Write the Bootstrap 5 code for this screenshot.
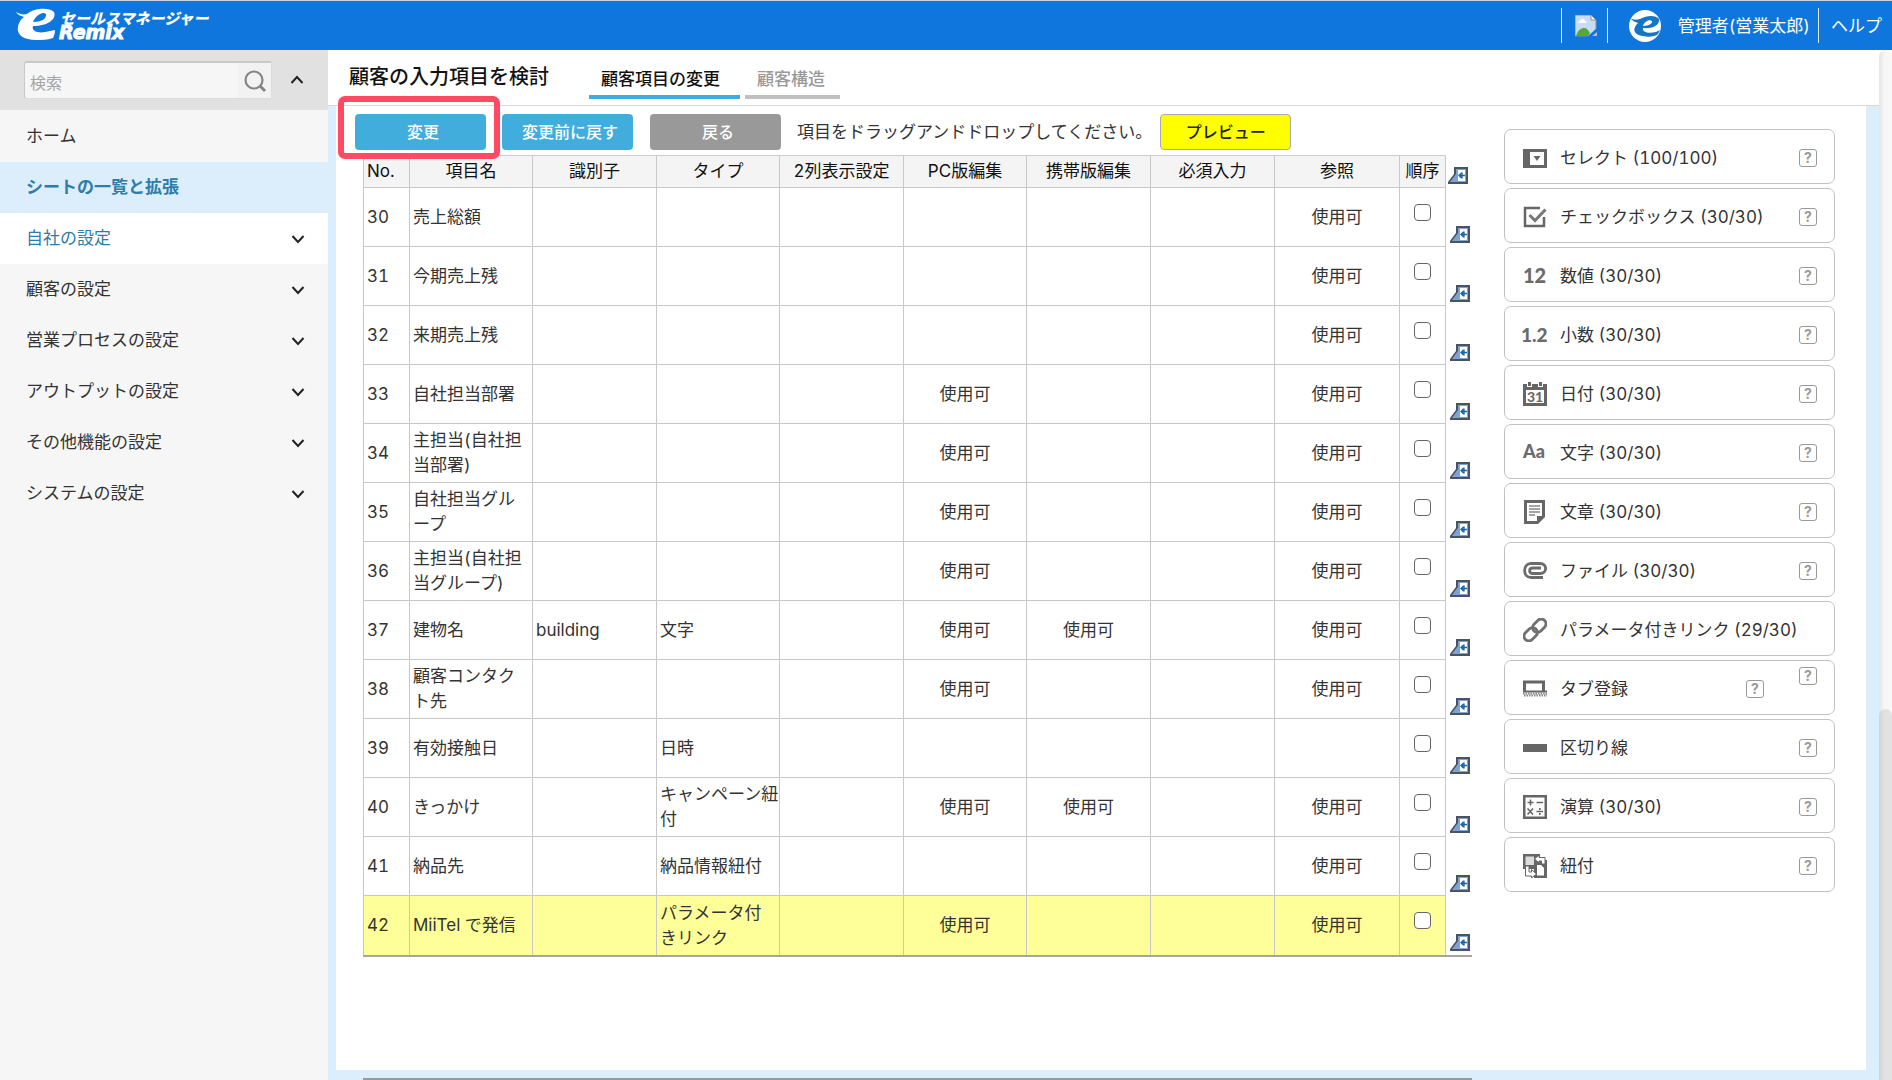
<!DOCTYPE html>
<html lang="ja">
<head>
<meta charset="utf-8">
<meta name="viewport" content="width=device-width, initial-scale=1">
<title>顧客の入力項目を検討</title>
<link href="https://cdn.jsdelivr.net/npm/bootstrap@5.3.0/dist/css/bootstrap.min.css" rel="stylesheet">
<style>
  body { font-family: Inter, "Noto Sans CJK JP", sans-serif; font-size: 17px; line-height: 25px; color: #333; font-variant-numeric: tabular-nums; }
  a { text-decoration: none; }
  .topbar { height: 50px; background: #0f76de; border-top: 1px solid #c8d4de; padding-left: 16px; padding-right: 10px; }
  .topbar a, .topbar span { color: #fff; }
  .topbar .user-name, .topbar .help-link { padding-top: 2px; }
  .topbar .sep { width: 1px; height: 35px; background: #dce9f8; }
  .broken-img { margin: 0 10px 0 13px; }
  .avatar { margin-left: 21px; margin-right: 17px; }
  .side { width: 328px; background: #f6f6f6; }
  .side-search { height: 60px; background: #e1e1e1; padding: 0 24px; }
  .search-box { width: 248px; height: 38px; background: #f6f6f6; border: 1px solid #dcdcdc; border-top: 2px solid #c8c8c8; border-left-color: #c8c8c8; border-radius: 3px; }
  .search-box input { min-width: 0; border: 0; background: transparent; font-size: 16px; padding: 6px 5px 0; outline: 0; }
  .search-box input::placeholder { color: #a5a5a5; opacity: 1; }
  .search-box button { width: 40px; border: 0; background: #f2f2f2; padding: 0; }
  .plain-btn { border: 0; background: transparent; padding: 0; line-height: 0; }
  .side-nav a { height: 51px; padding: 0 23px 0 26px; color: #333; }
  .side-nav a:first-child { height: 52px; }
  .side-nav a.current { background: #dcedfb; color: #2e7caa; font-weight: 700; }
  .side-nav a.opened { background: #fff; color: #2e7caa; }
  .page-head { height: 56px; border-bottom: 1px solid #d8d8d8; padding-left: 21px; }
  .page-head h1 { font-size: 20px; line-height: 28px; font-weight: 500; color: #111; margin: 0 40px 0 0; padding-top: 13px; }
  .page-tabs { gap: 5px; }
  .page-tabs a { height: 49px; padding: 17px 15px 0 12px; border-bottom: 4px solid #c0c0c0; color: #999; font-weight: 500; }
  .page-tabs a.active { padding-right: 20px; border-color: #41addd; color: #111; }
  .canvas { background: #dcedfb; padding: 0 13px 0 8px; }
  .sheet { background: #fff; padding: 8px 31px 0 19px; gap: 32px; }
  .toolbar { margin-bottom: 5px; }
  .act { width: 131px; height: 36px; border: 0; border-radius: 4px; background: #41addd; color: #fff; font-size: 16px; line-height: 24px; padding: 0 0 0 5px; font-weight: 500; }
  .act.back { background: #999; margin-left: 17px; }
  .act.preview { background: #ff0; color: #222; border: 1px solid #aaa; padding-left: 0; margin-left: 8px; }
  .marked { position: relative; }
  .marked::after { content: ""; position: absolute; inset: -18px -14px -9px -17px; border: 6px solid #ff4a63; border-radius: 7px; pointer-events: none; z-index: 2; }
  .item-table { table-layout: fixed; width: 100%; border-collapse: separate; border-spacing: 0; border-bottom: 2px solid #a4a4a4; }
  .item-table th { height: 33px; font-weight: 400; text-align: center; color: #111; background: #f4f4f4; border-top: 1px solid #ccc; padding: 0; line-height: 31px; }
  .item-table th:first-child { text-align: left; padding-left: 3px; }
  .item-table td { height: 59px; padding: 0 3px; white-space: nowrap; }
  .item-table th, .item-table td { border-right: 1px solid #c8c8c8; border-bottom: 1px solid #c8c8c8; vertical-align: middle; }
  .item-table tr > :first-child { border-left: 1px solid #c8c8c8; }
  .item-table tr > .ins { border: 0; background: transparent; vertical-align: bottom; padding: 0 0 4px 2px; text-align: left; line-height: 0; }
  .item-table tbody tr:last-child td { border-bottom: 0; }
  .item-table .picked td { background: #ff9; }
  .item-table td:nth-child(n+6) { text-align: center; }
  .item-table input { display: block; width: 17px; height: 17px; margin: 0 auto 10px; appearance: none; border: 1px solid #666; border-radius: 4px; background: #fff; }
  .parts { width: 331px; gap: 4px; padding-top: 15px; }
  .part { height: 55px; border: 1px solid #c2c2c2; border-radius: 7px; padding: 2px 17px 0 18px; color: #333; cursor: move; }
  .part > svg { margin-right: 13px; flex: none; }
  .part > .label-text { padding-top: 1px; }
  .part svg text { font-family: Lato, sans-serif; font-weight: 900; fill: #6b6b6b; }
  .q { display: block; width: 18px; height: 18px; border: 1px solid #999; border-radius: 3px; background: #fff; color: #999; font-size: 14px; font-weight: 700; line-height: 16px; text-align: center; padding: 0; }
  .q.q-inner { margin-right: 35px; }
  .foot-bar { height: 2px; width: 1109px; background: #999; margin-left: 27px; }
  .scroll-rail { width: 13px; background: linear-gradient(90deg,#e4e4e4,#f6f6f6 40%,#f8f8f8); border-radius: 7px 7px 0 0; }
  .scroll-rail div { height: 36%; background: linear-gradient(90deg,#d2d2d2,#e2e2e2 40%); border-radius: 7px 7px 0 0; }
</style>
</head>
<body class="vh-100 overflow-hidden d-flex flex-column">
<svg class="d-none">
  <symbol id="ins" viewBox="0 0 20 17"><path d="M0 17V15L6 7V0H20V17Z" fill="#4a5362"/><path d="M2 15 8 7V2H18V15Z" fill="#7ba3d6"/><path d="M10 3H17V14H10Z" fill="#fff"/><path d="M17 8.500H11M13.500 6 11 8.500l2.500 2.500M14 5.500v6" fill="none" stroke="#1764a5" stroke-width="1.300"/></symbol>
  <symbol id="down" viewBox="0 0 14 10"><path d="M1.500 2 7 8 12.500 2" fill="none" stroke="#222" stroke-width="2"/></symbol>
</svg>

<header class="topbar d-flex align-items-center flex-shrink-0">
  <a href="#" class="me-auto" aria-label="eセールスマネージャー Remix">
    <svg width="200" height="38" viewBox="0 0 200 38" class="d-block">
      <path d="M0 5 C4 7 7 8 11 7 C18 1 33 0 38 5 C41 12 32 19 17 19 C15 25 24 27 34 24 L39 23 C39 26 38 29 37 31 C31 33 26 33 20 33 C8 33 0 28 2 19 C3 15 5 12 8 10 C4 9 1 7 0 5Z M17 15 C25 15 31 12 30 7 C27 4 20 8 17 15Z" fill="#fff" fill-rule="evenodd"/>
      <text x="44" y="17" font-family="Noto Sans CJK JP" font-size="15" font-weight="900" font-style="italic" fill="#fff">セールスマネージャー</text>
      <text x="43" y="32" font-family="DejaVu Sans" font-size="19" font-weight="700" font-style="italic" fill="#fff" stroke="#fff" stroke-width="1">Remix</text>
    </svg>
  </a>
  <div class="sep"></div>
  <svg class="broken-img" width="22" height="22" viewBox="0 0 22 22"><path d="M0 0H16L21 5V15L14 21H0Z" fill="#c9dcf6" stroke="#8c9299"/><path d="M16 0V5H21Z" fill="#fff" stroke="#8c9299"/><path d="M3 8c0-2 2-2 2-2 1-3 5-2 5 0 2 0 2 2 1 2Z" fill="#fff"/><path d="M1 21C3 15 6 13 9 13s4 2 6 5l-2 3Z" fill="#56a839"/><path d="M22 13 12 22H15L22 16Z" fill="#0f76de"/><path d="M22 17v4h-5Z" fill="#b5bcc4"/></svg>
  <div class="sep"></div>
  <svg class="avatar" width="32" height="32" viewBox="0 0 32 32"><circle cx="16" cy="16" r="16" fill="#fff"/><path d="M1 8c3 2 6 2 10 1 7-4 16-4 19 0 1 6-6 10-16 9-1 4 5 6 13 4l4-2c-1 2-2 4-3 5-5 2-9 2-14 1C6 25 2 20 9 13 5 12 3 10 1 8Zm13 8c6 0 10-3 9-5-3-2-8 1-9 5Z" fill="#1574c4" fill-rule="evenodd"/></svg>
  <span class="user-name">管理者(営業太郎)</span>
  <div class="sep mx-2"></div>
  <a href="#" class="help-link ms-1">ヘルプ</a>
</header>

<div class="d-flex flex-grow-1 overflow-hidden">
  <aside class="side flex-shrink-0">
    <div class="side-search d-flex align-items-center justify-content-between">
      <form class="search-box d-flex" role="search">
        <input type="search" class="flex-grow-1" placeholder="検索" aria-label="検索">
        <button type="button" aria-label="検索する"><svg width="24" height="24" viewBox="0 0 24 24"><circle cx="11" cy="11" r="8.500" fill="none" stroke="#858585" stroke-width="2.200"/><path d="M17 17 22 22" stroke="#858585" stroke-width="3"/></svg></button>
      </form>
      <button class="plain-btn" type="button" aria-label="閉じる"><svg width="14" height="10" viewBox="0 0 14 10"><path d="M1.500 8 7 2 12.500 8" fill="none" stroke="#222" stroke-width="2"/></svg></button>
    </div>
    <nav class="side-nav d-flex flex-column">
      <a href="#" class="d-flex align-items-center">ホーム</a>
      <a href="#" class="d-flex align-items-center current">シートの一覧と拡張</a>
      <a href="#" class="d-flex align-items-center justify-content-between opened">自社の設定<svg width="14" height="10"><use href="#down"/></svg></a>
      <a href="#" class="d-flex align-items-center justify-content-between">顧客の設定<svg width="14" height="10"><use href="#down"/></svg></a>
      <a href="#" class="d-flex align-items-center justify-content-between">営業プロセスの設定<svg width="14" height="10"><use href="#down"/></svg></a>
      <a href="#" class="d-flex align-items-center justify-content-between">アウトプットの設定<svg width="14" height="10"><use href="#down"/></svg></a>
      <a href="#" class="d-flex align-items-center justify-content-between">その他機能の設定<svg width="14" height="10"><use href="#down"/></svg></a>
      <a href="#" class="d-flex align-items-center justify-content-between">システムの設定<svg width="14" height="10"><use href="#down"/></svg></a>
    </nav>
  </aside>

  <main class="flex-grow-1 d-flex flex-column">
    <div class="page-head d-flex flex-shrink-0">
      <h1>顧客の入力項目を検討</h1>
      <nav class="page-tabs d-flex">
        <a href="#" class="active">顧客項目の変更</a>
        <a href="#">顧客構造</a>
      </nav>
    </div>
    <div class="canvas flex-grow-1 d-flex flex-column">
      <div class="sheet flex-grow-1 d-flex">
        <section class="flex-grow-1">
          <div class="toolbar d-flex align-items-center">
            <span class="marked"><button type="button" class="act d-block">変更</button></span>
            <button type="button" class="act ms-3">変更前に戻す</button>
            <button type="button" class="act back">戻る</button>
            <span class="ms-3">項目をドラッグアンドドロップしてください。</span>
            <button type="button" class="act preview">プレビュー</button>
          </div>
          <div class="ps-2">
          <table class="item-table">
            <colgroup><col style="width:47px"><col style="width:123px"><col style="width:124px"><col style="width:123px"><col style="width:124px"><col style="width:123px"><col style="width:124px"><col style="width:124px"><col style="width:125px"><col style="width:46px"><col style="width:26px"></colgroup>
            <thead>
              <tr><th>No.</th><th>項目名</th><th>識別子</th><th>タイプ</th><th>2列表示設定</th><th>PC版編集</th><th>携帯版編集</th><th>必須入力</th><th>参照</th><th>順序</th><th class="ins"><button class="plain-btn" type="button" aria-label="挿入"><svg width="20" height="17"><use href="#ins"/></svg></button></th></tr>
            </thead>
            <tbody>
              <tr><td>30</td><td>売上総額</td><td></td><td></td><td></td><td></td><td></td><td></td><td>使用可</td><td><input type="checkbox" aria-label="30"></td><td class="ins"><button class="plain-btn" type="button" aria-label="挿入"><svg width="20" height="17"><use href="#ins"/></svg></button></td></tr>
              <tr><td>31</td><td>今期売上残</td><td></td><td></td><td></td><td></td><td></td><td></td><td>使用可</td><td><input type="checkbox" aria-label="31"></td><td class="ins"><button class="plain-btn" type="button" aria-label="挿入"><svg width="20" height="17"><use href="#ins"/></svg></button></td></tr>
              <tr><td>32</td><td>来期売上残</td><td></td><td></td><td></td><td></td><td></td><td></td><td>使用可</td><td><input type="checkbox" aria-label="32"></td><td class="ins"><button class="plain-btn" type="button" aria-label="挿入"><svg width="20" height="17"><use href="#ins"/></svg></button></td></tr>
              <tr><td>33</td><td>自社担当部署</td><td></td><td></td><td></td><td>使用可</td><td></td><td></td><td>使用可</td><td><input type="checkbox" aria-label="33"></td><td class="ins"><button class="plain-btn" type="button" aria-label="挿入"><svg width="20" height="17"><use href="#ins"/></svg></button></td></tr>
              <tr><td>34</td><td>主担当(自社担<br>当部署)</td><td></td><td></td><td></td><td>使用可</td><td></td><td></td><td>使用可</td><td><input type="checkbox" aria-label="34"></td><td class="ins"><button class="plain-btn" type="button" aria-label="挿入"><svg width="20" height="17"><use href="#ins"/></svg></button></td></tr>
              <tr><td>35</td><td>自社担当グル<br>ープ</td><td></td><td></td><td></td><td>使用可</td><td></td><td></td><td>使用可</td><td><input type="checkbox" aria-label="35"></td><td class="ins"><button class="plain-btn" type="button" aria-label="挿入"><svg width="20" height="17"><use href="#ins"/></svg></button></td></tr>
              <tr><td>36</td><td>主担当(自社担<br>当グループ)</td><td></td><td></td><td></td><td>使用可</td><td></td><td></td><td>使用可</td><td><input type="checkbox" aria-label="36"></td><td class="ins"><button class="plain-btn" type="button" aria-label="挿入"><svg width="20" height="17"><use href="#ins"/></svg></button></td></tr>
              <tr><td>37</td><td>建物名</td><td>building</td><td>文字</td><td></td><td>使用可</td><td>使用可</td><td></td><td>使用可</td><td><input type="checkbox" aria-label="37"></td><td class="ins"><button class="plain-btn" type="button" aria-label="挿入"><svg width="20" height="17"><use href="#ins"/></svg></button></td></tr>
              <tr><td>38</td><td>顧客コンタク<br>ト先</td><td></td><td></td><td></td><td>使用可</td><td></td><td></td><td>使用可</td><td><input type="checkbox" aria-label="38"></td><td class="ins"><button class="plain-btn" type="button" aria-label="挿入"><svg width="20" height="17"><use href="#ins"/></svg></button></td></tr>
              <tr><td>39</td><td>有効接触日</td><td></td><td>日時</td><td></td><td></td><td></td><td></td><td></td><td><input type="checkbox" aria-label="39"></td><td class="ins"><button class="plain-btn" type="button" aria-label="挿入"><svg width="20" height="17"><use href="#ins"/></svg></button></td></tr>
              <tr><td>40</td><td>きっかけ</td><td></td><td>キャンペーン紐<br>付</td><td></td><td>使用可</td><td>使用可</td><td></td><td>使用可</td><td><input type="checkbox" aria-label="40"></td><td class="ins"><button class="plain-btn" type="button" aria-label="挿入"><svg width="20" height="17"><use href="#ins"/></svg></button></td></tr>
              <tr><td>41</td><td>納品先</td><td></td><td>納品情報紐付</td><td></td><td></td><td></td><td></td><td>使用可</td><td><input type="checkbox" aria-label="41"></td><td class="ins"><button class="plain-btn" type="button" aria-label="挿入"><svg width="20" height="17"><use href="#ins"/></svg></button></td></tr>
              <tr class="picked"><td>42</td><td>MiiTel で発信</td><td></td><td>パラメータ付<br>きリンク</td><td></td><td>使用可</td><td></td><td></td><td>使用可</td><td><input type="checkbox" aria-label="42"></td><td class="ins bg-transparent"><button class="plain-btn" type="button" aria-label="挿入"><svg width="20" height="17"><use href="#ins"/></svg></button></td></tr>
            </tbody>
          </table>
          </div>
        </section>

        <aside class="parts d-flex flex-column flex-shrink-0">
          <div class="part d-flex align-items-center"><svg width="24" height="24" viewBox="0 0 24 24"><path d="M0 3H24V22H0ZM7 6V19H21V6Z" fill="#666" fill-rule="evenodd"/><path d="M10.500 10H17.500L14 15Z" fill="#666"/></svg><span class="label-text me-auto">セレクト (100/100)</span><button type="button" class="q">?</button></div>
          <div class="part d-flex align-items-center"><svg width="24" height="24" viewBox="0 0 24 24"><path d="M17 3H2V21H21V12" fill="none" stroke="#666" stroke-width="2.500"/><path d="M6.500 10 12 15.500 22.500 4.500" fill="none" stroke="#777" stroke-width="3"/></svg><span class="label-text me-auto">チェックボックス (30/30)</span><button type="button" class="q">?</button></div>
          <div class="part d-flex align-items-center"><svg width="24" height="24" viewBox="0 0 24 24"><text x="0" y="19" font-size="20">12</text></svg><span class="label-text me-auto">数値 (30/30)</span><button type="button" class="q">?</button></div>
          <div class="part d-flex align-items-center"><svg width="24" height="24" viewBox="0 0 24 24" overflow="visible"><text x="-2" y="19" font-size="19">1.2</text></svg><span class="label-text me-auto">小数 (30/30)</span><button type="button" class="q">?</button></div>
          <div class="part d-flex align-items-center"><svg width="24" height="24" viewBox="0 0 24 24"><path d="M0 2H24V24H0ZM3 8V21H21V8Z" fill="#666" fill-rule="evenodd"/><path d="M4 0H9V5H4ZM15 0H20V5H15Z" fill="#fff"/><path d="M5 0H8V4H5ZM16 0H19V4H16Z" fill="#666"/><text x="4" y="20" font-size="14">31</text></svg><span class="label-text me-auto">日付 (30/30)</span><button type="button" class="q">?</button></div>
          <div class="part d-flex align-items-center"><svg width="24" height="24" viewBox="0 0 24 24" overflow="visible"><text x="0" y="17" font-size="18">Aa</text></svg><span class="label-text me-auto">文字 (30/30)</span><button type="button" class="q">?</button></div>
          <div class="part d-flex align-items-center"><svg width="24" height="24" viewBox="0 0 24 24"><path d="M1 0H22V17L15 24H1ZM4 3V21H14V16H19V3Z" fill="#666" fill-rule="evenodd"/><path d="M6 6H17M6 9H17M6 12H17M6 15H12" stroke="#888" stroke-width="1.500"/></svg><span class="label-text me-auto">文章 (30/30)</span><button type="button" class="q">?</button></div>
          <div class="part d-flex align-items-center"><svg width="24" height="24" viewBox="0 0 24 24"><path d="M20 18.500H8C-.500 18.500-.500 4.500 8 4.500H17C24.500 4.500 24.500 14.500 17 14.500H10C5.500 14.500 5.500 9 10 9H18" fill="none" stroke="#6b6b6b" stroke-width="2.800"/></svg><span class="label-text me-auto">ファイル (30/30)</span><button type="button" class="q">?</button></div>
          <div class="part d-flex align-items-center"><svg width="24" height="24" viewBox="0 0 24 24" fill="none" stroke="#707070" stroke-width="2.800"><rect x="-7.500" y="-4.800" width="15" height="9.600" rx="4.800" transform="translate(7.700 16.300) rotate(-45)"/><rect x="-7.500" y="-4.800" width="15" height="9.600" rx="4.800" transform="translate(16.300 7.700) rotate(-45)"/></svg><span class="label-text me-auto">パラメータ付きリンク (29/30)</span></div>
          <div class="part d-flex align-items-center"><svg width="24" height="24" viewBox="0 0 24 24"><path d="M1.500 15V5H20.500V15" fill="none" stroke="#666" stroke-width="3"/><path d="M0 14.500H24" stroke="#666" stroke-width="2"/><path d="M0 16.500H24M1 18.500H24" stroke="#888" stroke-width="2" stroke-dasharray="1.500 1"/></svg><span class="label-text me-auto">タブ登録</span><button type="button" class="q q-inner">?</button><button type="button" class="q align-self-start mt-1">?</button></div>
          <div class="part d-flex align-items-center"><svg width="24" height="24" viewBox="0 0 24 24"><path d="M0 8H24V16H0Z" fill="#666"/></svg><span class="label-text me-auto">区切り線</span><button type="button" class="q">?</button></div>
          <div class="part d-flex align-items-center"><svg width="24" height="24" viewBox="0 0 24 24" fill="none" stroke="#666"><path d="M1.250 1.250H22.750V22.750H1.250Z" stroke-width="2.500"/><path d="M4.500 7.500H10.500M7.500 4.500V10.500M13.500 7.500H20M4.500 13.500 10 19.500M10 13.500 4.500 19.500M13.500 16.500H20M16.800 13V15M16.800 18V20" stroke-width="1.600"/></svg><span class="label-text me-auto">演算 (30/30)</span><button type="button" class="q">?</button></div>
          <div class="part d-flex align-items-center"><svg width="24" height="24" viewBox="0 0 24 24"><path d="M0 0H17V15H0Z" fill="#666"/><path d="M2.500 2.500H11V11H2.500Z" fill="#ddd"/><path d="M11 6H24V24H11Z" fill="#666"/><path d="M14 11H18L21 14V21.500H14Z" fill="#fff"/><path d="M11.500 5 16 1V3.500H22V10H18.500V7H16V9Z" fill="#fff" stroke="#666"/><path d="M2.500 12H6V18H8.500V15.500L13.500 20 8.500 24V22H2.500Z" fill="#fff" stroke="#666"/></svg><span class="label-text me-auto">紐付</span><button type="button" class="q">?</button></div>
        </aside>
      </div>
      <div class="pt-2 flex-shrink-0"><div class="foot-bar mw-100"></div></div>
    </div>
  </main>
  <div class="scroll-rail flex-shrink-0 d-flex flex-column justify-content-end" aria-hidden="true"><div></div></div>
</div>
<script src="https://cdn.jsdelivr.net/npm/bootstrap@5.3.0/dist/js/bootstrap.bundle.min.js"></script>
</body>
</html>
